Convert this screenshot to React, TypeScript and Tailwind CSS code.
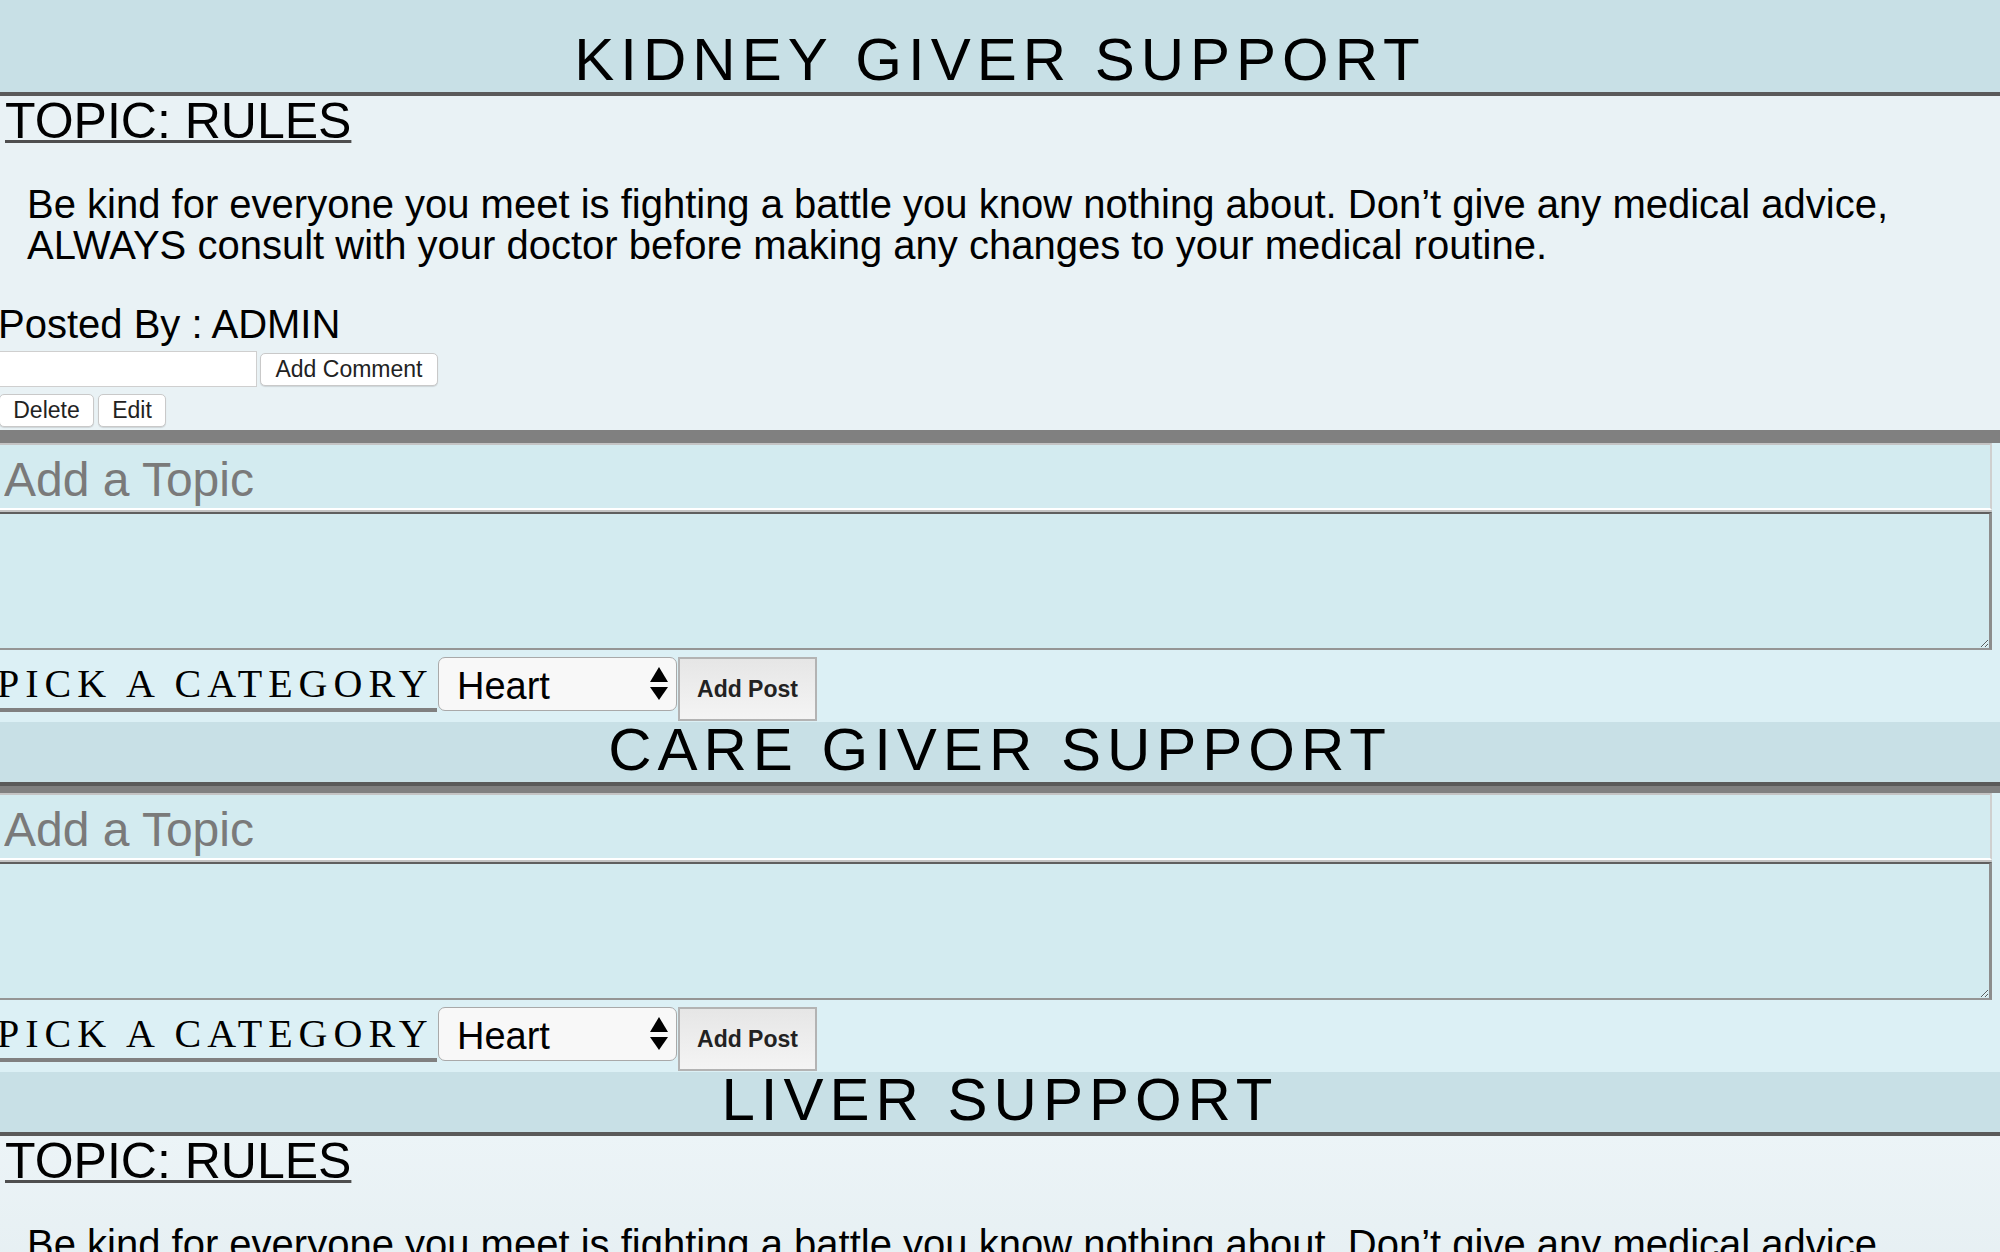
import React from "react";

const sans = "font-['Liberation_Sans',Arial,sans-serif]";

function SectionHeader({ title, first = false }: { title: string; first?: boolean }) {
  return (
    <header
      className={`${first ? "pt-[32px]" : "pt-0"} pb-[4px] bg-[#c8e0e6] border-b-4 border-[#5a5a5a]`}
    >
      <h1 className={`${sans} text-center text-[60px] leading-[56px] tracking-[6px] text-black font-normal`}>
        {title}
      </h1>
    </header>
  );
}

function RulesPost({ fade = false }: { fade?: boolean }) {
  return (
    <section
      className={`${sans} pt-[5px] pb-[3px] border-b-[6px] border-[#808080] ${
        fade ? "bg-gradient-to-b from-[#ecf4f7] to-[#dde8ec]" : "bg-[#e9f2f5]"
      }`}
    >
      <h2 className="pl-[5px] text-[50px] leading-[40px] text-black underline decoration-[3px] decoration-[#4f4f4f]">
        TOPIC: RULES
      </h2>
      <p className="mt-[43px] pl-[27px] pr-[60px] text-[40px] leading-[41px] text-black">
        Be kind for everyone you meet is fighting a battle you know nothing about. Don’t give any medical advice,
        ALWAYS consult with your doctor before making any changes to your medical routine.
      </p>
      <p className="mt-[38px] ml-[-2px] text-[40px] leading-[41px] text-black">Posted By : ADMIN</p>

      <div className="mt-[6px] flex items-center">
        <input
          type="text"
          className="ml-[-2px] h-[36px] w-[259px] border border-[#cfcfcf] bg-white outline-none"
        />
        <button className="ml-[3px] h-[33px] w-[178px] rounded-[5px] border border-[#c9c9c9] bg-white text-[23px] leading-none text-[#222] shadow-[0_1px_1px_rgba(0,0,0,0.12)]">
          Add Comment
        </button>
      </div>

      <div className="mt-[7px] flex gap-[4px]">
        <button className="ml-[-1px] h-[33px] w-[95px] rounded-[5px] border border-[#c9c9c9] bg-white text-[23px] leading-none text-[#222] shadow-[0_1px_1px_rgba(0,0,0,0.12)]">
          Delete
        </button>
        <button className="h-[33px] w-[68px] rounded-[5px] border border-[#c9c9c9] bg-white text-[23px] leading-none text-[#222] shadow-[0_1px_1px_rgba(0,0,0,0.12)]">
          Edit
        </button>
      </div>
    </section>
  );
}

function TopicForm() {
  return (
    <form className={`${sans} bg-[#dcf0f5] border-t-[7px] border-[#808080] pb-[1px]`}>
      <input
        type="text"
        placeholder="Add a Topic"
        className="block ml-[-2px] w-[1994px] h-[67px] pt-[6px] pl-[6px] bg-[#d3ebf0] border-t-2 border-r-2 border-b-2 border-t-[#c4c4c4] border-r-[#cfcfcf] border-b-white text-[48px] text-black placeholder:text-[#7a7a7a] outline-none shadow-[0_2px_0_#c4c4c4]"
      />
      <textarea className="block mt-[2px] ml-[-2px] w-[1994px] h-[138px] bg-[#d3ebf0] border-t-2 border-r-[3px] border-b-2 border-t-[#5f5f5f] border-r-[#8c8c8c] border-b-[#959595] outline-none" />

      <div className="flex items-start pt-[7px]">
        <label className="ml-[-3px] mt-[7px] w-[440px] shrink-0 pb-[4px] border-b-4 border-[#808080] font-['Liberation_Serif','Times_New_Roman',serif] text-[40px] leading-[40px] tracking-[6px] text-black">
          PICK A CATEGORY
        </label>
        <div className="relative ml-[1px] h-[54px] w-[239px] shrink-0">
          <select className="h-full w-full appearance-none rounded-[7px] border border-[#a9a9a9] bg-[#f8f8f8] pl-[18px] text-[38px] text-black outline-none">
            <option>Heart</option>
            <option>Kidney</option>
            <option>Liver</option>
          </select>
          <svg
            className="pointer-events-none absolute left-[212px] top-[10px]"
            width="18"
            height="33"
            viewBox="0 0 18 33"
          >
            <polygon points="9,0 18,15 0,15" fill="#000" />
            <polygon points="0,20 18,20 9,33" fill="#000" />
          </svg>
        </div>
        <button
          type="button"
          className="ml-[1px] h-[64px] w-[139px] shrink-0 border-2 border-[#b3b3b3] bg-gradient-to-b from-[#e6e6e6] to-[#f4f4f4] text-[23px] font-bold text-[#222]"
        >
          Add Post
        </button>
      </div>
    </form>
  );
}

export default function App() {
  return (
    <div className="w-[2000px] h-[1252px] overflow-hidden bg-[#e9f2f5]">
      <SectionHeader title="KIDNEY GIVER SUPPORT" first />
      <RulesPost />
      <TopicForm />
      <SectionHeader title="CARE GIVER SUPPORT" />
      <TopicForm />
      <SectionHeader title="LIVER SUPPORT" />
      <RulesPost fade />
    </div>
  );
}
